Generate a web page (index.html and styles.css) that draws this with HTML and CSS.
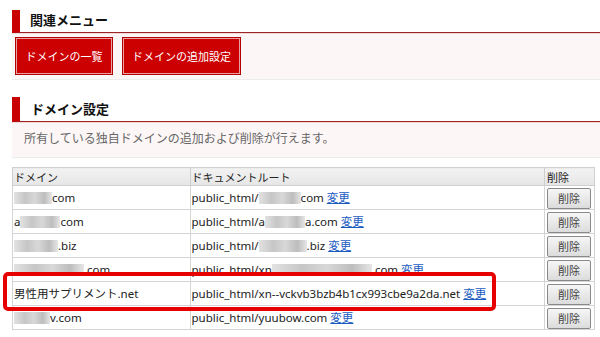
FILE: index.html
```html
<!DOCTYPE html>
<html lang="ja">
<head>
    <meta charset="UTF-8">
    <title>ドメイン設定</title>
    <link rel="stylesheet" href="styles.css">
</head>
<body>
<div class="page">

    <section class="panel">
        <h2 class="panel-title">関連メニュー</h2>
        <div class="panel-body menu">
            <a class="menu-btn btn-list" href="#">ドメインの一覧</a>
            <a class="menu-btn btn-add" href="#">ドメインの追加設定</a>
        </div>
    </section>

    <section class="panel panel-domain">
        <h2 class="panel-title">ドメイン設定</h2>
        <p class="panel-body lead">所有している独自ドメインの追加および削除が行えます。</p>

        <table class="domains">
            <tr>
                <th class="col-domain">ドメイン</th>
                <th class="col-root">ドキュメントルート</th>
                <th class="col-del">削除</th>
            </tr>
            <tr>
                <td><span class="blur w38"></span>com</td>
                <td>public_html/<span class="blur w42"></span>com <a href="#">変更</a></td>
                <td class="col-del"><button class="del-btn">削除</button></td>
            </tr>
            <tr>
                <td>a<span class="blur w40"></span>com</td>
                <td>public_html/a<span class="blur w40"></span>a.com <a href="#">変更</a></td>
                <td class="col-del"><button class="del-btn">削除</button></td>
            </tr>
            <tr>
                <td><span class="blur w44"></span>.biz</td>
                <td>public_html/<span class="blur w48"></span>.biz <a href="#">変更</a></td>
                <td class="col-del"><button class="del-btn">削除</button></td>
            </tr>
            <tr>
                <td><span class="blur w70"></span>.com</td>
                <td>public_html/xn<span class="blur w100"></span>.com <a href="#">変更</a></td>
                <td class="col-del"><button class="del-btn">削除</button></td>
            </tr>
            <tr>
                <td>男性用サプリメント.net</td>
                <td>public_html/xn--vckvb3bzb4b1cx993cbe9a2da.net <a href="#">変更</a></td>
                <td class="col-del"><button class="del-btn">削除</button></td>
            </tr>
            <tr>
                <td><span class="blur w36"></span>v.com</td>
                <td>public_html/yuubow.com <a href="#">変更</a></td>
                <td class="col-del"><button class="del-btn">削除</button></td>
            </tr>
        </table>
    </section>

    <div class="highlight"></div>
</div>
</body>
</html>
```

FILE: styles.css
```css
*{
    margin: 0;
    padding: 0;
    box-sizing: border-box;
}

body{
    background-color: #fff;
    font-family: "Noto Sans", "Noto Sans CJK JP", sans-serif;
    color: #222;
}

.page{
    position: relative;
    width: 600px;
    height: 337px;
    overflow: hidden;
    padding: 10px 0 0 12px;
}

.panel-title{
    height: 23px;
    line-height: 21px;
    padding-left: 10px;
    border-left: 8px solid #c80000;
    border-bottom: 1px solid #9b2424;
    font-size: 13px;
    font-weight: bold;
    color: #111;
}

.panel-body{
    background-color: #fdf6f6;
    border-top: 1px solid #f3d6d6;
    border-bottom: 1px solid #ececec;
}

/* related menu */

.menu{
    display: flex;
    gap: 11px;
    height: 47px;
    padding: 4px 0 0 4px;
}

.menu-btn{
    display: flex;
    align-items: center;
    justify-content: center;
    height: 36px;
    background-color: #cc0000;
    border: 1px solid #e9a0a0;
    outline: 1px solid #b30000;
    color: #fff;
    font-size: 11px;
    text-decoration: none;
}

.btn-list{
    width: 96px;
}

.btn-add{
    width: 117px;
}

/* domain settings */

.panel-domain{
    margin-top: 17px;
}

.panel-domain .panel-title{
    height: 25px;
    line-height: 24px;
    padding-left: 11px;
}

.lead{
    height: 36px;
    line-height: 32px;
    padding-left: 12px;
    font-size: 12px;
    color: #666;
}

.domains{
    margin-top: 9px;
    width: 583px;
    border-collapse: collapse;
    font-size: 11.5px;
}

.domains th{
    height: 18px;
    text-align: left;
    font-weight: normal;
    font-size: 11px;
    background: linear-gradient(#f2f2f2, #e6e6e6);
    border: 1px solid #cfcfcf;
    padding: 0 1px;
    color: #222;
}

.domains td{
    height: 24px;
    border: 1px solid #d4d4d4;
    padding: 0 1px;
    line-height: 14px;
    white-space: nowrap;
}

.col-domain{
    width: 178px;
}

.col-root{
    width: 355px;
}

.domains .col-del{
    width: 50px;
    padding: 1px 2px 0;
}

.domains a{
    color: #1a5bbf;
}

.del-btn{
    display: block;
    width: 44px;
    height: 21px;
    background: linear-gradient(#f6f6f6, #dcdcdc);
    border: 1px solid #8a8a8a;
    border-radius: 2px;
    font-family: "Noto Sans CJK JP", sans-serif;
    font-size: 11px;
    color: #444;
}

.blur{
    display: inline-block;
    height: 12px;
    vertical-align: -2px;
    background: linear-gradient(90deg, #e2e2e2, #c6c6c6 30%, #d8d8d8 55%, #bdbdbd 80%, #e6e6e6);
    filter: blur(0.6px);
}

.w36{ width: 36px; }
.w38{ width: 38px; }
.w40{ width: 40px; }
.w42{ width: 42px; }
.w44{ width: 44px; }
.w48{ width: 48px; }
.w70{ width: 70px; }
.w100{ width: 100px; }

/* red annotation box */

.highlight{
    position: absolute;
    left: 3px;
    top: 272px;
    width: 493px;
    height: 39px;
    border: 4px solid #e60000;
    border-radius: 5px;
}
```
